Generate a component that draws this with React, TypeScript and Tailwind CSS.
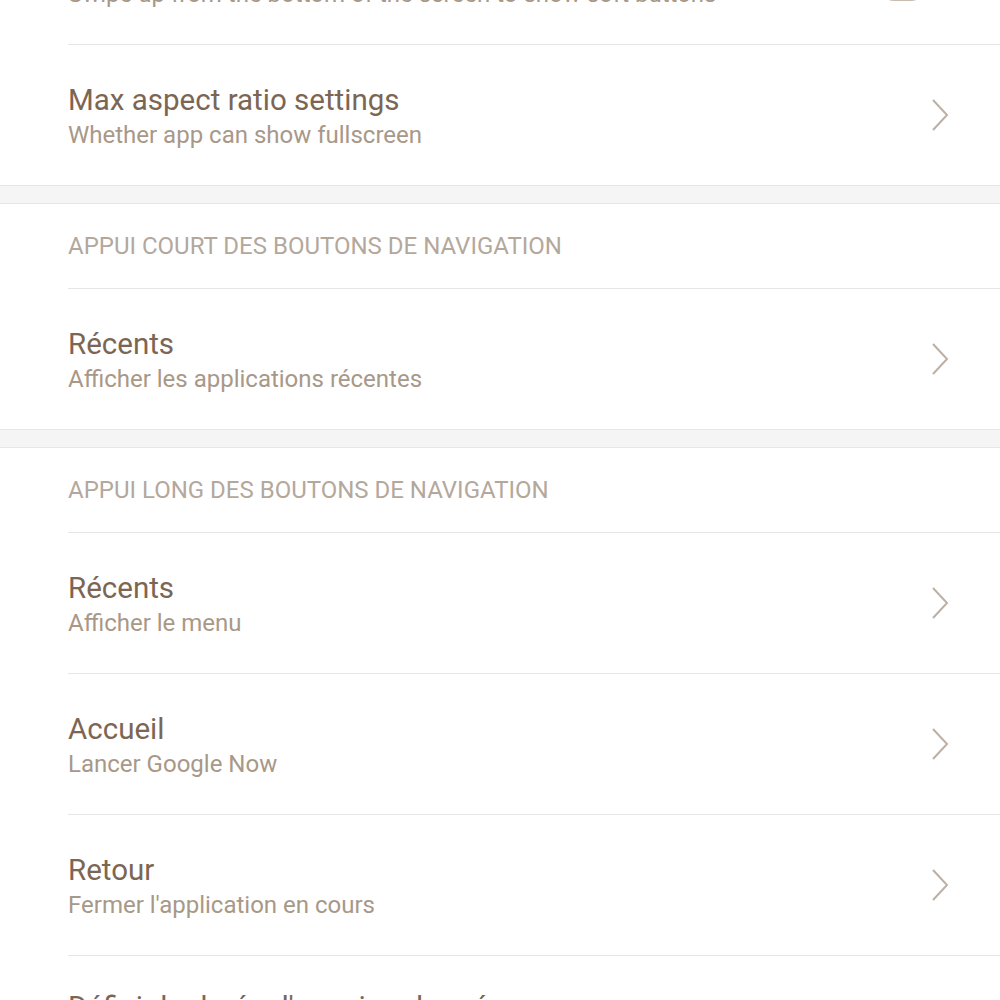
import React from 'react';

const font = { fontFamily: 'Roboto, "Noto Sans", sans-serif' };

const Chevron = () => (
  <svg width="18" height="34" viewBox="0 0 18 34" className="flex-shrink-0 mr-[51px]">
    <polyline points="2,2 16,17 2,32" fill="none" stroke="#bcb0a5" strokeWidth="2" />
  </svg>
);

const Divider = () => (
  <div className="pl-[68px]">
    <div className="h-px bg-[#e6e6e6]" />
  </div>
);

const Band = () => <div className="h-[19px] bg-[#f5f5f5] border-y border-[#e6e6e6]" />;

const Header = ({ label }: { label: string }) => (
  <div className="h-[84px] flex items-center pl-[68px]">
    <span className="text-[24px] leading-[30px] text-[#b4a89c] uppercase">{label}</span>
  </div>
);

interface RowProps {
  title: string;
  sub: string;
  last?: boolean;
}

const Row = ({ title, sub, last }: RowProps) => (
  <div className="h-[140px] flex items-center pl-[68px]">
    <div className={`flex-1 min-w-0 ${last ? '-mt-[5px]' : 'pt-[2px]'}`}>
      <div className="text-[29.5px] leading-[34px] text-[#7c6653]">{title}</div>
      <div className="mt-[3px] text-[24px] leading-[30px] text-[#a89888]">{sub}</div>
    </div>
    <Chevron />
  </div>
);

export default function App() {
  return (
    <div className="w-[1000px] h-[1000px] overflow-hidden bg-white" style={font}>
      <div className="-mt-[96px]">
        <div className="h-[140px] flex items-center pl-[68px]">
          <div className="flex-1 min-w-0 pt-[2px]">
            <div className="text-[29.5px] leading-[34px] text-[#7c6653]">Masquer les boutons de navigation</div>
            <div className="mt-[3px] text-[24px] leading-[30px] text-[#a89888]">
              Swipe up from the bottom of the screen to show soft buttons
            </div>
          </div>
          <div className="w-[51px] h-[34px] mt-[20px] mr-[72px] rounded-full bg-[#d9d0c7] border border-[#c9bdb2]" />
        </div>
        <Divider />
        <Row title="Max aspect ratio settings" sub="Whether app can show fullscreen" />
        <Band />
        <Header label="Appui court des boutons de navigation" />
        <Divider />
        <Row title="Récents" sub="Afficher les applications récentes" />
        <Band />
        <Header label="Appui long des boutons de navigation" />
        <Divider />
        <Row title="Récents" sub="Afficher le menu" />
        <Divider />
        <Row title="Accueil" sub="Lancer Google Now" />
        <Divider />
        <Row title="Retour" sub="Fermer l'application en cours" />
        <Divider />
        <Row title="Définir la durée d'appui prolongé" sub="Durée actuelle : courte" last />
      </div>
    </div>
  );
}
